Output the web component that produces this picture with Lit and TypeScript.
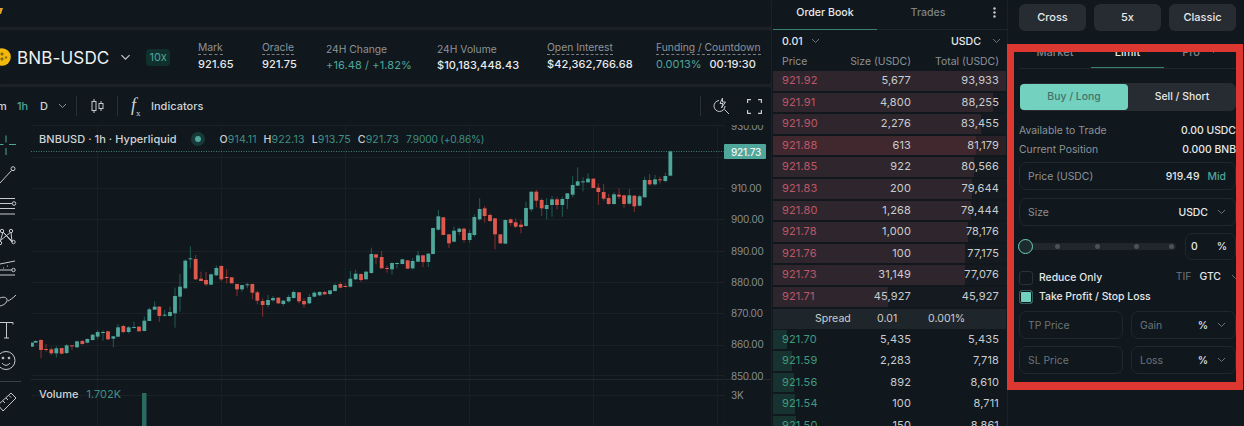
import { LitElement, html, css, svg } from "lit";
import { customElement } from "lit/decorators.js";

type C = [number, number, number, number, number, number];
// x, wick top, body top, body bottom, wick bottom, up(1)/down(0)
const A: C[] = [[96,665,668,680,680,1],[107,661,663,668,668,1],[123,658,660,690,715,0],[138,672,687,690,695,0],[154,682,688,700,705,0],[169,678,685,700,712,1],[185,683,684,701,703,0],[200,672,676,699,702,1],[216,675,676,678,690,0],[231,662,664,682,684,1],[247,660,663,672,674,0],[262,655,657,668,670,1],[278,642,644,660,662,1],[293,630,636,650,658,1],[309,631,636,637,662,1],[324,632,634,658,660,0],[340,648,649,656,682,1],[354,612,622,650,652,1],[370,615,618,636,640,0],[386,618,622,636,640,1],[402,605,621,623,625,1],[417,618,620,634,634,0],[433,590,602,633,634,1],[448,563,568,603,603,1],[464,544,560,569,570,1],[478,558,560,588,605,0],[494,570,584,587,590,1],[510,560,576,588,590,1],[525,503,528,580,623,1],[540,462,500,530,575,1],[556,418,422,505,505,1],[571,379,415,418,445,1],[587,405,417,478,480,0],[603,455,476,483,483,0],[618,456,480,493,498,0],[633,460,463,494,494,1],[649,437,444,466,468,1],[664,436,438,478,484,0],[680,447,471,473,490,0],[695,471,472,490,490,0],[711,491,492,508,528,0],[726,495,495,508,515,1],[742,488,493,496,505,1],[757,491,492,518,538,0],[772,512,517,542,553,0]];
const B: C[] = [[8,535,543,555,590,0],[24,525,540,555,562,1],[39,528,534,541,545,1],[55,532,533,550,552,0],[70,540,542,552,558,1],[86,525,531,544,548,1],[101,511,516,534,536,1],[117,516,517,544,550,0],[132,535,543,553,563,0],[148,522,531,550,552,1],[163,514,518,530,532,1],[179,513,516,526,528,1],[194,513,516,523,525,0],[210,510,511,522,526,1],[225,490,495,513,515,1],[241,487,492,503,505,0],[256,490,498,500,502,0],[271,453,476,500,502,1],[287,449,461,478,480,1],[303,460,462,480,486,0],[318,453,455,478,478,1],[334,383,402,459,461,1],[348,402,403,413,433,0],[365,393,411,445,446,0],[381,436,444,447,458,0],[396,427,429,448,464,1],[411,427,429,432,445,1],[427,416,418,432,433,1],[443,420,421,446,447,0],[458,414,423,445,449,1],[474,393,406,425,426,1],[489,405,406,426,441,0],[505,399,401,426,441,1],[519,323,324,402,403,1],[535,270,289,329,332,1],[550,291,292,345,345,0],[567,342,343,370,384,0],[582,320,332,365,367,1],[598,323,326,336,345,1],[612,323,326,360,368,0],[629,329,339,360,368,1],[643,283,291,345,350,1],[659,235,267,298,302,1],[674,258,265,288,308,0],[690,280,285,303,306,0],[705,295,295,343,388,0],[721,342,343,370,372,0],[736,298,300,371,372,1],[752,295,298,309,318,0],[767,295,307,320,324,0]];
const D: C[] = [[3,300,314,321,340,0],[18,245,264,318,320,1],[34,215,215,268,275,1],[49,210,215,242,262,0],[65,235,240,265,288,0],[80,235,255,267,298,1],[96,228,238,255,290,1],[111,232,238,255,268,0],[127,230,237,255,290,1],[142,220,220,237,267,1],[158,168,195,224,232,1],[173,142,184,197,197,1],[189,172,184,186,214,1],[204,160,176,187,189,1],[220,175,176,204,204,0],[235,190,203,216,255,0],[251,192,216,236,242,0],[266,222,234,252,254,0],[282,217,223,252,254,1],[297,205,224,230,237,0],[312,225,226,252,263,0],[328,207,226,251,254,1],[343,226,227,259,276,0],[359,224,229,257,259,1],[374,170,180,232,232,1],[389,162,180,193,197,0],[405,165,178,193,197,1],[420,170,178,181,190,0],[436,158,168,183,187,1],[451,92,94,167,169,1]];

const candle = (off: number) => (c: C) => {
  const x = off + c[0] / 3;
  const y = (z: number) => 120 + z / 3;
  const col = c[5] ? "#4fa69a" : "#e0594f";
  const wick = c[5] ? "#1f5f56" : "#85302e";
  return svg`<rect x=${x - 0.5} y=${y(c[1])} width="1" height=${(c[4] - c[1]) / 3} fill=${wick}></rect>
    <rect x=${x - 1.9} y=${y(c[2])} width="3.8" height=${Math.max(1, (c[3] - c[2]) / 3)} fill=${col}></rect>`;
};

const asks = [
  ["921.92", "5,677", "93,933", 233, 0],
  ["921.91", "4,800", "88,255", 220, 0],
  ["921.90", "2,276", "83,455", 208, 0],
  ["921.88", "613", "81,179", 203, 1],
  ["921.85", "922", "80,566", 201, 0],
  ["921.83", "200", "79,644", 199, 0],
  ["921.80", "1,268", "79,444", 198, 0],
  ["921.78", "1,000", "78,176", 195, 0],
  ["921.76", "100", "77,175", 192, 0],
  ["921.73", "31,149", "77,076", 192, 0],
  ["921.71", "45,927", "45,927", 115, 0],
];
const bids = [
  ["921.70", "5,435", "5,435", 14],
  ["921.59", "2,283", "7,718", 19],
  ["921.56", "892", "8,610", 21],
  ["921.54", "100", "8,711", 22],
  ["921.50", "150", "8,861", 23],
];
const stats = [
  ["Mark", "921.65", true],
  ["Oracle", "921.75", true],
  ["24H Change", "+16.48 / +1.82%", false, "up"],
  ["24H Volume", "$10,183,448.43", false],
  ["Open Interest", "$42,362,766.68", true],
];
const chev = (w = 9) =>
  html`<svg class="chev" width=${w} height="6" viewBox="0 0 9 6"><path d="M1 1l3.5 3.5L8 1" fill="none" stroke="currentColor" stroke-width="1"></path></svg>`;

@customElement("app-root")
export class AppRoot extends LitElement {
  static styles = css`
    :host { display: block; width: 1244px; height: 426px; overflow: hidden; position: relative; background: #1b2126; font-family: Inter, "Liberation Sans", sans-serif; color: #e6e8e9; font-size: 11px; }
    .page { display: grid; grid-template-columns: 771px 235px 236px; column-gap: 1px; height: 426px; }
    .main { display: grid; grid-template-rows: 27px 54px 1fr; row-gap: 3px; height: 426px; min-width: 0; }
    .strip, .head, .chartp { background: #10171d; border-radius: 0 3px 3px 0; overflow: hidden; }
    .strip svg { display: block; margin-top: 7px; }
    .head { display: flex; align-items: center; }
    .coin { width: 198px; display: flex; align-items: center; flex: none; }
    .coin svg.logo { margin-left: -7px; margin-right: 6px; flex: none; }
    .sym { font-size: 17.1px; font-weight: 400; letter-spacing: .1px; color: #eef0f1; }
    .coin .chev { margin-left: 11px; color: #c6cacc; width: 11px; height: 7px; }
    .lev { margin-left: 15px; background: #10302d; color: #4fa69a; border-radius: 4px; padding: 2px 3px; font-size: 11px; line-height: 13px; }
    .stat { flex: none; display: flex; flex-direction: column; gap: 3px; line-height: 13px; }
    .lab { color: #8d9397; font-size: 10.3px; align-self: flex-start; white-space: nowrap; }
    .lab.u { border-bottom: 1px dashed #7a8085; line-height: 11px; padding-bottom: 1px; margin-top: -1px; }
    .val { font-size: 11px; font-weight: 500; color: #e8eaeb; letter-spacing: .1px; white-space: nowrap; }
    .up { color: #4fa69a; }
    .fund { display: flex; gap: 8px; letter-spacing: 0; }
    .fund .up { font-weight: 400; }
    .chartp { display: flex; flex-direction: column; border-radius: 3px 3px 0 0; }
    .tbar { height: 38px; flex: none; display: flex; align-items: center; font-size: 11px; font-weight: 500; color: #cfd3d5; }
    .tbar .m { margin-left: -3px; width: 20px; }
    .tbar .h1 { color: #4fa69a; width: 23px; }
    .tbar .d { width: 18px; }
    .tbar .chev { color: #8d9397; width: 9px; }
    .sep { width: 1px; height: 20px; background: #2a3136; flex: none; }
    .fx { font-family: "Liberation Serif", serif; font-size: 18px; font-style: italic; color: #cfd3d5; width: 20px; font-weight: 400; margin-left: -1px; }
    .fx sub { font-size: 9px; font-style: normal; }
    .sp { flex: 1; }
    .cbody { flex: 1; display: flex; min-height: 0; }
    .tools { width: 31px; flex: none; display: block; }
    .plot { position: relative; width: 740px; flex: none; }
    .plot > svg { display: block; }
    .plot text { font-family: Inter, "Liberation Sans", sans-serif; font-size: 10px; letter-spacing: -.2px; }
    .legend { position: absolute; left: 8px; top: 6px; display: flex; align-items: center; height: 16px; font-size: 11px; white-space: nowrap; color: #c9cdcf; }
    .legend b { font-weight: 500; color: #cfd3d5; letter-spacing: .05px; }
    .legend .dot { margin: 0 19px 0 18px; width: 6px; height: 6px; border-radius: 50%; background: #4fa69a; box-shadow: 0 0 0 4px #173a38; flex: none; }
    .legend span.o { margin-right: 7px; color: #3f8f84; font-size: 10.6px; letter-spacing: .1px; }
    .legend span.o.ch { font-size: 10.2px; letter-spacing: -.2px; }
    .legend span.o i { font-style: normal; color: #c9cdcf; font-weight: 500; }
    .vol { position: absolute; left: 8px; top: 261px; display: flex; gap: 8px; font-size: 11px; line-height: 16px; }
    .vol b { font-weight: 500; color: #cfd3d5; }
    .vol span { color: #3f8f84; }

    .book { background: #10171d; overflow: hidden; padding-left: 1px; }
    .btabs { display: flex; height: 29px; align-items: center; border-bottom: 1px solid #1f262b; }
    .btabs div { width: 102px; text-align: center; font-size: 10.6px; font-weight: 500; color: #7d8488; height: 29px; line-height: 23px; margin-bottom: -1px; }
    .btabs div.on { color: #e6e8e9; border-bottom: 1px solid #3d7f76; box-sizing: border-box; width: 104px; }
    .btabs svg { margin-left: 14px; margin-top: -5px; }
    .bsel { display: flex; align-items: center; height: 22px; padding: 0 6px 1px 9px; font-weight: 500; font-size: 10.6px; color: #e6e8e9; }
    .bsel .chev { color: #6d7478; margin-left: 8px; }
    .bsel .r + .chev { margin-left: 11px; }
    .row { display: grid; grid-template-columns: 46px 83px 88px; width: 233px; padding: 0 8px 0 9px; box-sizing: border-box; height: 19.6px; line-height: 19.6px; margin-bottom: 2px; color: #c9cdcf; font-size: 11px; letter-spacing: .15px; white-space: nowrap; background-repeat: no-repeat; background-size: var(--w) 100%; }
    .row div:not(:first-child) { text-align: right; }
    .row.hd { color: #8d9397; height: 18px; line-height: 18px; margin-bottom: 0; font-size: 10.4px; letter-spacing: 0; }
    .ask { background-image: linear-gradient(#2f262d, #2f262d); background-color: #141a20; }
    .ask.hot { background-image: linear-gradient(#41272e, #41272e); background-color: #2a2127; }
    .ask div:first-child { color: #bd5669; }
    .bid { background-image: linear-gradient(#17332f, #17332f); }
    .bid div:first-child { color: #3f9a7f; }
    .spread { display: grid; grid-template-columns: 62px 51px 1fr; height: 20px; line-height: 20px; background: #1f262b; margin: 1px 0; width: 233px; padding-left: 42px; box-sizing: border-box; color: #c9cdcf; font-size: 10.6px; }

    .trade { background: #10171d; padding: 4px 8px 0 11px; overflow: hidden; font-size: 10.4px; }
    .top3 { display: grid; grid-template-columns: repeat(3, 67px); column-gap: 8px; }
    .top3 div { height: 27px; line-height: 26px; text-align: center; background: #262c31; border-radius: 6px; font-size: 11px; font-weight: 500; color: #e6e8e9; }
    .ttabs { display: grid; grid-template-columns: 72px 73px 72px; height: 24px; margin-top: 13px; border-bottom: 1px solid #1f262b; }
    .ttabs div { text-align: center; line-height: 17px; font-size: 11px; font-weight: 500; color: #7d8488; box-sizing: border-box; height: 24px; }
    .ttabs .on { color: #e6e8e9; border-bottom: 1px solid #3d7f76; }
    .ttabs .chev { margin-left: 9px; vertical-align: 2px; }
    .side { margin-top: 14px; margin-left: 1px; height: 28px; background: #262c31; border-radius: 6px; display: grid; grid-template-columns: 108px 1fr; font-weight: 500; text-align: center; line-height: 27px; }
    .side .b { background: #73d1c0; color: #44736a; border-radius: 4px; margin: 1px 0; line-height: 25px; }
    .info { display: flex; justify-content: space-between; height: 19px; line-height: 19px; white-space: nowrap; color: #8d9397; }
    .info b { font-weight: 500; color: #e6e8e9; }
    .infos { margin-top: 10px; }
    .field { height: 28px; border: 1px solid #1f282e; border-radius: 7px; box-sizing: border-box; display: flex; align-items: center; padding: 0 9px 0 8px; color: #8d9397; white-space: nowrap; }
    .field b { font-weight: 500; color: #e6e8e9; }
    .field .chev { color: #6d7478; margin-left: 9px; flex: none; }
    .field .up { margin-left: 8px; font-weight: 500; }
    .mt3 { margin-top: 3px; }
    .mt8 { margin-top: 8px; }
    .sl { display: flex; align-items: center; margin-top: 7px; height: 27px; }
    .track { position: relative; width: 158px; height: 7px; margin-left: -1px; background: #20262b; border-radius: 4px; display: flex; justify-content: flex-end; align-items: center; gap: 34.5px; padding-right: 2px; box-sizing: border-box; flex: none; }
    .track i { width: 5px; height: 5px; border-radius: 50%; background: #4b5257; flex: none; }
    .track i.last { margin-left: -4.5px; }
    .track .knob { position: absolute; left: 0; top: -4px; width: 15px; height: 15px; box-sizing: border-box; border: 1.5px solid #6fcdbc; border-radius: 50%; background: #1c2b2e; }
    .pct { margin-left: 9px; width: 51px; flex: none; height: 27px; padding: 0 8px 0 5px; justify-content: space-between; }
    .check { display: flex; align-items: center; font-weight: 500; color: #e6e8e9; white-space: nowrap; line-height: 14px; }
    .box { width: 14px; height: 14px; box-sizing: border-box; border: 1px solid #2a3237; border-radius: 3px; margin-right: 6px; flex: none; }
    .box.on { border: 1px solid #2f5f58; background: #73d1c0; box-shadow: inset 0 0 0 1px #10171d; }
    .tif { color: #6d7478; font-weight: 400; margin-right: 8px; margin-top: -3px; }
    .gtc { margin-top: -3px; }
    .check .chev { color: #6d7478; margin-left: 10px; margin-top: -3px; margin-right: -4px; }
    .c1 { margin-top: 11px; }
    .c2 { margin-top: 5px; }
    .tp { display: grid; grid-template-columns: 104px 105px; column-gap: 8px; row-gap: 7px; margin-top: 7px; }
    .tp .field { color: #6d7478; }
    .red { position: absolute; left: 1007px; top: 44px; width: 236px; height: 346px; box-sizing: border-box; border: 7px solid #dc3730; border-top-width: 8px; border-bottom-width: 8px; pointer-events: none; }
  `;

  private chart() {
    const hs = [125, 157, 188, 219, 251, 282, 313, 345, 375, 395];
    const vs = [97, 221, 345, 469, 593, 717];
    const ax: [string, number][] = [["930.00", 125.5], ["910.00", 188], ["900.00", 219], ["890.00", 250.5], ["880.00", 282], ["870.00", 313], ["860.00", 344], ["850.00", 375.5], ["3K", 395]];
    return svg`<svg width="740" height="301" viewBox="31 125 740 301">
      ${hs.map((y) => svg`<rect x="31" y=${y} width="693" height="1" fill="#1a2227"></rect>`)}
      ${vs.map((x) => svg`<rect x=${x} y="125" width="1" height="301" fill="#182025"></rect>`)}
      <rect x="31" y="379" width="740" height="1" fill="#232a2f"></rect>
      <rect x="724" y="125" width="1" height="301" fill="#151c21"></rect>
      <rect x="142" y="393" width="4.5" height="33" fill="#2a6a60"></rect>
      ${A.map(candle(0))}${B.map(candle(260))}${D.map(candle(520))}
      <line x1="31" y1="151.5" x2="724" y2="151.5" stroke="#3f7f76" stroke-width="1" stroke-dasharray="1 1.5"></line>
      ${ax.map(([t, y]) => svg`<text x="731" y=${y + 4} fill="#878d91">${t}</text>`)}
      <rect x="724" y="144" width="42" height="15" rx="1" fill="#4fa69a"></rect>
      <text x="731" y="155.500" fill="#f2f5f5" font-weight="500">921.73</text>
    </svg>`;
  }

  private tools() {
    const s = "#c6cacc";
    return html`<svg class="tools" width="31" height="301" viewBox="0 125 31 301" fill="none" stroke=${s} stroke-width="1">
      <path d="M0 144.5h3.5M9 144.5h7M6 135.5v7M6 148v7" stroke="#4fa69a"></path>
      <path d="M0 183L11.5 170.5"></path><circle cx="13" cy="168.7" r="2"></circle>
      <path d="M0 198.5h15M0 203.5h12M0 208.5h15M0 214h15"></path><circle cx="14" cy="203.5" r="1.8"></circle>
      <path d="M0 242L3 232L12 242L11 232L1 240M3 232L13 242"></path>
      <circle cx="2" cy="231" r="1.7"></circle><circle cx="11" cy="231" r="1.7"></circle><circle cx="13.5" cy="242" r="1.7"></circle><circle cx="0" cy="243" r="1.7"></circle>
      <path d="M0 264L15 261M0 270h12M0 275h15"></path><circle cx="13.5" cy="270" r="1.7"></circle><path d="M3 268h1M7 266h1" stroke-width="1.2"></path>
      <path d="M0 298c4-2 8 0 7 3c-1 3-5 5-8 5M8 301c2-1 5-3 8-6"></path>
      <path d="M0 322.5h13M6.5 322.5v15.500M4 338h5M13 322.5v2"></path>
      <circle cx="6" cy="360.5" r="9"></circle><circle cx="3" cy="358" r=".9" fill=${s}></circle><circle cx="9" cy="358" r=".9" fill=${s}></circle><path d="M2 363c2 3 6 3 8 0"></path>
      <rect x="0" y="381" width="21" height="1" fill="#3a4146" stroke="none"></rect>
      <path d="M-2 405L11 393L16 398L3 411ZM3 401l2 2M6 398l2 2M9 395.5l2 2"></path>
    </svg>`;
  }

  render() {
    return html`<div class="page">
      <div class="main">
        <div class="strip"><svg width="4" height="8" viewBox="0 0 4 8"><path d="M0 1h3L1 7H0z" fill="#e0a030"></path></svg></div>
        <div class="head">
          <div class="coin">
            <svg class="logo" width="18" height="18" viewBox="0 0 18 18"><circle cx="9" cy="9" r="8.8" fill="#f0b90b"></circle><path d="M9 4l2 2-2 2-2-2zM5 8l1.5 1.5L5 11 3.5 9.5zM13 8l1.5 1.5L13 11l-1.5-1.5zM9 9l2 2-2 2-2-2z" fill="#8a6a10"></path></svg>
            <span class="sym">BNB-USDC</span>${chev()}<span class="lev">10x</span>
          </div>
          ${stats.map(
            (s, i) => html`<div class="stat" style="width:${[64, 64, 111, 110, 109][i]}px">
              <span class="lab ${s[2] ? "u" : ""}">${s[0]}</span>
              <span class="val ${s[3] ? "up" : ""}" style=${s[3] ? "font-weight:400" : ""}>${s[1]}</span>
            </div>`
          )}
          <div class="stat"><span class="lab u">Funding / Countdown</span><span class="val fund"><span class="up">0.0013%</span><span>00:19:30</span></span></div>
        </div>
        <div class="chartp">
          <div class="tbar">
            <span class="m">m</span><span class="h1">1h</span><span class="d">D</span>${chev()}
            <span style="width:9px"></span><span class="sep"></span><span style="width:14px"></span>
            <svg width="13" height="16" viewBox="0 0 13 16" fill="none" stroke="#c6cacc"><rect x="1" y="3.5" width="4" height="9"></rect><path d="M3 1v2.5M3 12.5V15M10 3v2.5M10 10.5V13"></path><rect x="8" y="5.5" width="4" height="5"></rect></svg>
            <span style="width:13px"></span><span class="sep"></span><span style="width:14px"></span>
            <span class="fx">f<sub>x</sub></span><span>Indicators</span>
            <span class="sp"></span><span class="sep"></span><span style="width:12px"></span>
            <svg width="17" height="18" viewBox="0 0 17 18" fill="none" stroke="#c6cacc"><path d="M6 3.5A5.5 5.5 0 1 0 12 9M11.5 12.5L16 17"></path><path d="M9.500 1L7 6.5h3L8.5 11l4-6h-3z"></path></svg>
            <span style="width:17px"></span>
            <svg width="15" height="15" viewBox="0 0 15 15" fill="none" stroke="#c6cacc" stroke-width="1.2"><path d="M.6 4V.6H4M11 .6h3.4V4M14.4 11v3.4H11M4 14.4H.6V11"></path></svg>
            <span style="width:9px"></span>
          </div>
          <div class="cbody">
            ${this.tools()}
            <div class="plot">
              ${this.chart()}
              <div class="legend">
                <b>BNBUSD · 1h · Hyperliquid</b><span class="dot"></span>
                <span class="o"><i>O</i>914.11</span><span class="o"><i>H</i>922.13</span><span class="o"><i>L</i>913.75</span><span class="o"><i>C</i>921.73</span><span class="o ch">7.9000 (+0.86%)</span>
              </div>
              <div class="vol"><b>Volume</b><span>1.702K</span></div>
            </div>
          </div>
        </div>
      </div>

      <div class="book">
        <div class="btabs"><div class="on">Order Book</div><div>Trades</div>
          <svg width="3" height="11" viewBox="0 0 3 11" fill="#c6cacc"><circle cx="1.5" cy="1.5" r="1.2"></circle><circle cx="1.5" cy="5.5" r="1.2"></circle><circle cx="1.5" cy="9.5" r="1.2"></circle></svg>
        </div>
        <div class="bsel"><span>0.01</span>${chev()}<span class="sp"></span><span class="r">USDC</span>${chev()}</div>
        <div class="row hd"><div>Price</div><div>Size (USDC)</div><div>Total (USDC)</div></div>
        ${asks.map(
          (r) => html`<div class="row ask ${r[4] ? "hot" : ""}" style="--w:${r[3]}px"><div>${r[0]}</div><div>${r[1]}</div><div>${r[2]}</div></div>`
        )}
        <div class="spread"><span>Spread</span><span>0.01</span><span>0.001%</span></div>
        ${bids.map(
          (r) => html`<div class="row bid" style="--w:${r[3]}px"><div>${r[0]}</div><div>${r[1]}</div><div>${r[2]}</div></div>`
        )}
      </div>

      <div class="trade">
        <div class="top3"><div>Cross</div><div>5x</div><div>Classic</div></div>
        <div class="ttabs"><div>Market</div><div class="on">Limit</div><div>Pro${chev()}</div></div>
        <div class="side"><div class="b">Buy / Long</div><div>Sell / Short</div></div>
        <div class="infos">
          <div class="info"><span>Available to Trade</span><b>0.00 USDC</b></div>
          <div class="info"><span>Current Position</span><b>0.000 BNB</b></div>
        </div>
        <div class="field mt3"><span>Price (USDC)</span><span class="sp"></span><b>919.49</b><span class="up">Mid</span></div>
        <div class="field mt8"><span>Size</span><span class="sp"></span><b>USDC</b>${chev()}</div>
        <div class="sl">
          <div class="track"><i></i><i></i><i></i><i class="last"></i><span class="knob"></span></div>
          <div class="field pct"><b>0</b><b>%</b></div>
        </div>
        <div class="check c1"><span class="box"></span>Reduce Only<span class="sp"></span><span class="tif">TIF</span><span class="gtc">GTC</span>${chev()}</div>
        <div class="check c2"><span class="box on"></span>Take Profit / Stop Loss</div>
        <div class="tp">
          <div class="field">TP Price</div>
          <div class="field"><span>Gain</span><span class="sp"></span><b>%</b>${chev()}</div>
          <div class="field">SL Price</div>
          <div class="field"><span>Loss</span><span class="sp"></span><b>%</b>${chev()}</div>
        </div>
      </div>
    </div>
    <div class="red"></div>`;
  }
}
